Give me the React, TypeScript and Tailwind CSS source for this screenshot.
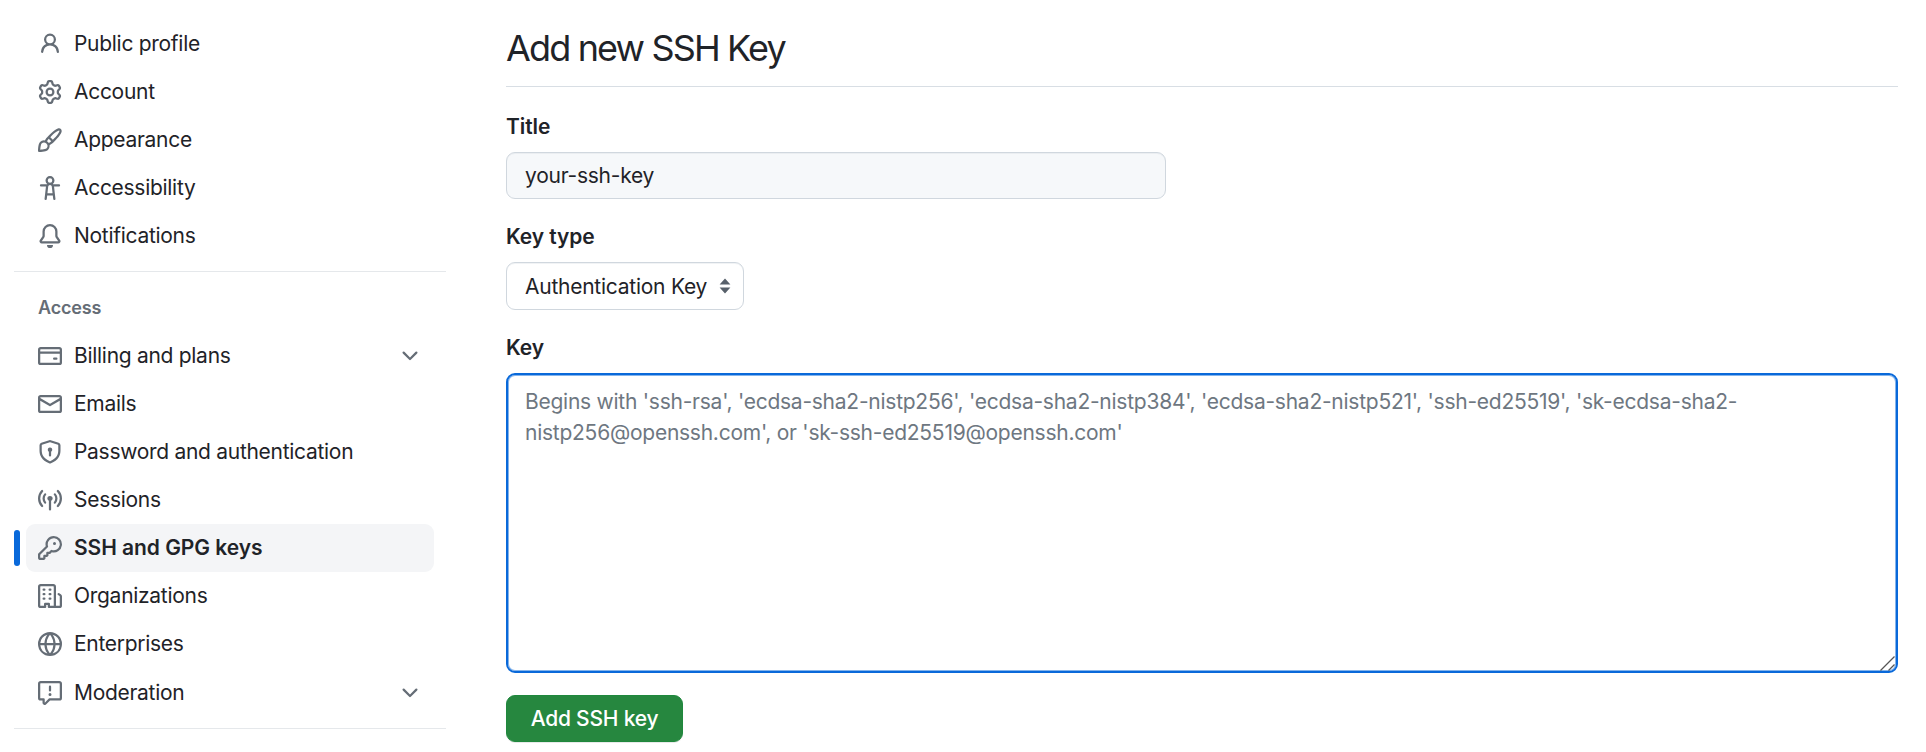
import type { ReactNode } from "react";

const paths = {
  person:
    "M10.561 8.073a6.005 6.005 0 0 1 3.432 5.142.75.75 0 1 1-1.498.07 4.5 4.5 0 0 0-8.99 0 .75.75 0 0 1-1.498-.07 6.004 6.004 0 0 1 3.431-5.142 3.999 3.999 0 1 1 5.123 0ZM10.5 5a2.5 2.5 0 1 0-5 0 2.5 2.5 0 0 0 5 0Z",
  gear:
    "M8 0a8.2 8.2 0 0 1 .701.031C9.444.095 9.99.645 10.16 1.29l.288 1.107c.018.066.079.158.212.224.231.114.454.243.668.386.123.082.233.09.299.071l1.103-.303c.644-.176 1.392.021 1.82.63.27.385.506.792.704 1.218.315.675.111 1.422-.364 1.891l-.814.806c-.049.048-.098.147-.088.294.016.257.016.515 0 .772-.01.147.038.246.088.294l.814.806c.475.469.679 1.216.364 1.891a7.977 7.977 0 0 1-.704 1.217c-.428.61-1.176.807-1.82.63l-1.102-.302c-.067-.019-.177-.011-.3.071a5.909 5.909 0 0 1-.668.386c-.133.066-.194.158-.211.224l-.29 1.106c-.168.646-.715 1.196-1.458 1.26a8.006 8.006 0 0 1-1.402 0c-.743-.064-1.289-.614-1.458-1.26l-.289-1.106c-.018-.066-.079-.158-.212-.224a5.738 5.738 0 0 1-.668-.386c-.123-.082-.233-.09-.299-.071l-1.103.303c-.644.176-1.392-.021-1.82-.63a8.12 8.12 0 0 1-.704-1.218c-.315-.675-.111-1.422.363-1.891l.815-.806c.05-.048.098-.147.088-.294a6.214 6.214 0 0 1 0-.772c.01-.147-.038-.246-.088-.294l-.815-.806C.635 6.045.431 5.298.746 4.623a7.92 7.92 0 0 1 .704-1.217c.428-.61 1.176-.807 1.82-.63l1.102.302c.067.019.177.011.3-.071.214-.143.437-.272.668-.386.133-.066.194-.158.211-.224l.29-1.106C6.009.645 6.556.095 7.299.03 7.53.01 7.764 0 8 0Zm-.571 1.525c-.036.003-.108.036-.137.146l-.289 1.105c-.147.561-.549.967-.998 1.189-.173.086-.34.183-.5.29-.417.278-.97.423-1.529.27l-1.103-.303c-.109-.03-.175.016-.195.045-.22.312-.412.644-.573.99-.014.031-.021.11.059.19l.815.806c.411.406.562.957.53 1.456a4.709 4.709 0 0 0 0 .582c.032.499-.119 1.05-.53 1.456l-.815.806c-.081.08-.073.159-.059.19.162.346.353.677.573.989.02.03.085.076.195.046l1.102-.303c.56-.153 1.113-.008 1.53.27.161.107.328.204.501.29.447.222.85.629.997 1.189l.289 1.105c.029.109.101.143.137.146a6.6 6.6 0 0 0 1.142 0c.036-.003.108-.036.137-.146l.289-1.105c.147-.561.549-.967.998-1.189.173-.086.34-.183.5-.29.417-.278.97-.423 1.529-.27l1.103.303c.109.029.175-.016.195-.045.22-.313.411-.644.573-.99.014-.031.021-.11-.059-.19l-.815-.806c-.411-.406-.562-.957-.53-1.456a4.709 4.709 0 0 0 0-.582c-.032-.499.119-1.05.53-1.456l.815-.806c.081-.08.073-.159.059-.19a6.464 6.464 0 0 0-.573-.989c-.02-.03-.085-.076-.195-.046l-1.102.303c-.56.153-1.113.008-1.53-.27a4.44 4.44 0 0 0-.501-.29c-.447-.222-.85-.629-.997-1.189l-.289-1.105c-.029-.11-.101-.143-.137-.146a6.6 6.6 0 0 0-1.142 0ZM11 8a3 3 0 1 1-6 0 3 3 0 0 1 6 0ZM9.5 8a1.5 1.5 0 1 0-3.001.001A1.5 1.5 0 0 0 9.5 8Z",
  paintbrush:
    "M11.134 1.535c.7-.509 1.416-.942 2.076-1.155.649-.21 1.463-.267 2.069.34.603.601.568 1.411.368 2.07-.202.668-.624 1.39-1.125 2.096-1.011 1.424-2.496 2.987-3.775 4.249-1.098 1.084-2.132 1.839-3.04 2.3a3.744 3.744 0 0 1-1.055 3.217c-.431.431-1.065.691-1.657.861-.614.177-1.294.287-1.914.357A21.151 21.151 0 0 1 .797 16H.743l.007-.75H.749L.742 16a.75.75 0 0 1-.743-.742l.743-.008-.742.007v-.054a21.25 21.25 0 0 1 .13-2.284c.067-.647.187-1.287.358-1.914.17-.591.43-1.226.86-1.657a3.746 3.746 0 0 1 3.227-1.054c.466-.893 1.225-1.907 2.314-2.982 1.271-1.255 2.833-2.75 4.245-3.777ZM1.62 13.089c-.051.464-.086.929-.104 1.395.466-.018.932-.053 1.396-.104a10.511 10.511 0 0 0 1.668-.309c.526-.151.856-.325 1.011-.48a2.25 2.25 0 1 0-3.182-3.182c-.155.155-.329.485-.48 1.01a10.515 10.515 0 0 0-.309 1.67Zm10.396-10.34c-1.224.89-2.605 2.189-3.822 3.384l1.718 1.718c1.21-1.205 2.51-2.597 3.387-3.833.47-.662.78-1.227.912-1.662.134-.444.032-.551.009-.575h-.001V1.78c-.014-.014-.113-.113-.548.027-.432.14-.995.462-1.655.942Zm-4.832 7.266-.001.001a9.859 9.859 0 0 0 1.63-1.142L7.155 7.216a9.7 9.7 0 0 0-1.161 1.607c.482.302.889.71 1.19 1.192Z",
  accessibility:
    "M9.923 5.302c.063.063.122.129.178.198H14A.75.75 0 0 1 14 7h-3.3l.578 5.163.362 2.997a.75.75 0 0 1-1.49.18L9.868 13H6.132l-.282 2.34a.75.75 0 0 1-1.49-.18l.362-2.997L5.3 7H2a.75.75 0 0 1 0-1.5h3.9a2.54 2.54 0 0 1 .176-.198 3 3 0 1 1 3.847 0ZM9.2 7.073h-.001a1.206 1.206 0 0 0-2.398 0L6.305 11.5h3.39ZM9.5 3a1.5 1.5 0 1 0-3.001.001A1.5 1.5 0 0 0 9.5 3Z",
  bell:
    "M8 16a2 2 0 0 0 1.985-1.75c.017-.137-.097-.25-.235-.25h-3.5c-.138 0-.252.113-.235.25A2 2 0 0 0 8 16ZM3 5a5 5 0 0 1 10 0v2.947c0 .05.015.098.042.139l1.703 2.555A1.519 1.519 0 0 1 13.482 13H2.518a1.516 1.516 0 0 1-1.263-2.36l1.703-2.554A.255.255 0 0 0 3 7.947Zm5-3.5A3.5 3.5 0 0 0 4.5 5v2.947c0 .346-.102.683-.294.97l-1.703 2.556a.017.017 0 0 0-.003.01l.001.006c0 .002.002.004.004.006l.006.004.007.001h10.964l.007-.001.006-.004.004-.006.001-.007a.017.017 0 0 0-.003-.01l-1.703-2.554a1.745 1.745 0 0 1-.294-.97V5A3.5 3.5 0 0 0 8 1.5Z",
  card:
    "M10.75 9a.75.75 0 0 0 0 1.5h1.5a.75.75 0 0 0 0-1.5h-1.5ZM0 3.75C0 2.784.784 2 1.75 2h12.5c.966 0 1.75.784 1.75 1.75v8.5A1.75 1.75 0 0 1 14.25 14H1.75A1.75 1.75 0 0 1 0 12.25ZM14.5 6.5h-13v5.75c0 .138.112.25.25.25h12.5a.25.25 0 0 0 .25-.25Zm0-2.75a.25.25 0 0 0-.25-.25H1.75a.25.25 0 0 0-.25.25V5h13Z",
  mail:
    "M1.75 2h12.5c.966 0 1.75.784 1.75 1.75v8.5A1.75 1.75 0 0 1 14.25 14H1.75A1.75 1.75 0 0 1 0 12.25v-8.5C0 2.784.784 2 1.75 2ZM1.5 12.251c0 .138.112.25.25.25h12.5a.25.25 0 0 0 .25-.25V5.809L8.38 9.397a.75.75 0 0 1-.76 0L1.5 5.809v6.442Zm13-8.181v-.32a.25.25 0 0 0-.25-.25H1.75a.25.25 0 0 0-.25.25v.32L8 7.88Z",
  shieldLock:
    "m8.533.133 5.25 1.68A1.75 1.75 0 0 1 15 3.48V7c0 1.566-.32 3.182-1.303 4.682-.983 1.498-2.585 2.813-5.032 3.855a1.697 1.697 0 0 1-1.33 0c-2.447-1.042-4.049-2.357-5.032-3.855C1.32 10.182 1 8.566 1 7V3.48a1.75 1.75 0 0 1 1.217-1.667l5.25-1.68a1.748 1.748 0 0 1 1.066 0Zm-.61 1.429.001.001-5.25 1.68a.251.251 0 0 0-.174.237V7c0 1.36.275 2.666 1.057 3.859.784 1.194 2.121 2.342 4.366 3.298a.196.196 0 0 0 .154 0c2.245-.957 3.582-2.103 4.366-3.297C13.225 9.666 13.5 8.358 13.5 7V3.48a.25.25 0 0 0-.174-.238l-5.25-1.68a.25.25 0 0 0-.153 0ZM9.5 6.5c0 .536-.286 1.032-.75 1.3v2.45a.75.75 0 0 1-1.5 0V7.8A1.5 1.5 0 1 1 9.5 6.5Z",
  broadcast:
    "M8.75 8.582v5.668a.75.75 0 0 1-1.5 0V8.582a1.75 1.75 0 1 1 1.5 0Zm3.983-7.125a.75.75 0 0 1 1.06.026A7.976 7.976 0 0 1 16 7c0 2.139-.84 4.083-2.207 5.517a.75.75 0 1 1-1.086-1.034A6.474 6.474 0 0 0 14.5 7a6.474 6.474 0 0 0-1.793-4.483.75.75 0 0 1 .026-1.06Zm-9.466 0c.3.286.312.76.026 1.06A6.474 6.474 0 0 0 1.5 7a6.47 6.47 0 0 0 1.793 4.483.75.75 0 0 1-1.086 1.034A7.973 7.973 0 0 1 0 7c0-2.139.84-4.083 2.207-5.517a.75.75 0 0 1 1.06-.026Zm8.556 2.321A4.988 4.988 0 0 1 13 7a4.988 4.988 0 0 1-1.177 3.222.75.75 0 1 1-1.146-.967A3.487 3.487 0 0 0 11.5 7c0-.86-.309-1.645-.823-2.255a.75.75 0 0 1 1.146-.967Zm-6.492.958A3.48 3.48 0 0 0 4.5 7a3.48 3.48 0 0 0 .823 2.255.75.75 0 0 1-1.146.967A4.981 4.981 0 0 1 3 7a4.982 4.982 0 0 1 1.188-3.236.75.75 0 1 1 1.143.972Z",
  key:
    "M10.5 0a5.499 5.499 0 1 1-1.288 10.848l-.932.932a.749.749 0 0 1-.53.22H7v.75a.749.749 0 0 1-.22.53l-.5.5a.749.749 0 0 1-.53.22H5v.75a.749.749 0 0 1-.22.53l-.5.5a.749.749 0 0 1-.53.22h-2A1.75 1.75 0 0 1 0 14.25v-2c0-.199.079-.389.22-.53l4.932-4.932A5.5 5.5 0 0 1 10.5 0Zm-4 5.5c-.001.431.069.86.205 1.269a.75.75 0 0 1-.181.768L1.5 12.56v1.69c0 .138.112.25.25.25h1.69l.06-.06v-1.19a.75.75 0 0 1 .75-.75h1.19l.06-.06v-1.19a.75.75 0 0 1 .75-.75h1.19l1.023-1.025a.75.75 0 0 1 .768-.18A4 4 0 1 0 6.5 5.5ZM11 6a1 1 0 1 1 0-2 1 1 0 0 1 0 2Z",
  organization:
    "M1.75 16A1.75 1.75 0 0 1 0 14.25V1.75C0 .784.784 0 1.75 0h8.5C11.216 0 12 .784 12 1.75v12.5c0 .085-.006.168-.018.25h2.268a.25.25 0 0 0 .25-.25V8.285a.25.25 0 0 0-.111-.208l-1.055-.703a.749.749 0 1 1 .832-1.248l1.055.703c.487.325.779.871.779 1.456v5.965A1.75 1.75 0 0 1 14.25 16h-3.5a.766.766 0 0 1-.197-.026c-.099.017-.2.026-.303.026h-3a.75.75 0 0 1-.75-.75V14h-1v1.25a.75.75 0 0 1-.75.75Zm-.25-1.75c0 .138.112.25.25.25H4v-1.25a.75.75 0 0 1 .75-.75h2.5a.75.75 0 0 1 .75.75v1.25h2.25a.25.25 0 0 0 .25-.25V1.75a.25.25 0 0 0-.25-.25h-8.5a.25.25 0 0 0-.25.25ZM3.75 6h.5a.75.75 0 0 1 0 1.5h-.5a.75.75 0 0 1 0-1.5ZM3 3.75A.75.75 0 0 1 3.75 3h.5a.75.75 0 0 1 0 1.5h-.5A.75.75 0 0 1 3 3.75Zm4 3A.75.75 0 0 1 7.75 6h.5a.75.75 0 0 1 0 1.5h-.5A.75.75 0 0 1 7 6.75ZM7.75 3h.5a.75.75 0 0 1 0 1.5h-.5a.75.75 0 0 1 0-1.5ZM3 9.75A.75.75 0 0 1 3.75 9h.5a.75.75 0 0 1 0 1.5h-.5A.75.75 0 0 1 3 9.75ZM7.75 9h.5a.75.75 0 0 1 0 1.5h-.5a.75.75 0 0 1 0-1.5Z",
  globe:
    "M8 0a8 8 0 1 1 0 16A8 8 0 0 1 8 0ZM5.78 8.75a9.64 9.64 0 0 0 1.363 4.177c.255.426.542.832.857 1.215.245-.296.551-.705.857-1.215A9.64 9.64 0 0 0 10.22 8.75Zm4.44-1.5a9.64 9.64 0 0 0-1.363-4.177c-.307-.51-.612-.919-.857-1.215a9.927 9.927 0 0 0-.857 1.215A9.64 9.64 0 0 0 5.78 7.25Zm-5.944 1.5H1.543a6.507 6.507 0 0 0 4.666 5.5c-.123-.181-.24-.365-.352-.552-.715-1.192-1.437-2.874-1.581-4.948Zm-2.733-1.5h2.733c.144-2.074.866-3.756 1.58-4.948.12-.197.237-.381.353-.552a6.507 6.507 0 0 0-4.666 5.5Zm10.181 1.5c-.144 2.074-.866 3.756-1.58 4.948-.12.197-.237.381-.353.552a6.507 6.507 0 0 0 4.666-5.5Zm2.733-1.5a6.507 6.507 0 0 0-4.666-5.5c.123.181.24.365.353.552.714 1.192 1.436 2.874 1.58 4.948Z",
  report:
    "M0 1.75C0 .784.784 0 1.75 0h12.5C15.216 0 16 .784 16 1.75v9.5A1.75 1.75 0 0 1 14.25 13H8.06l-2.573 2.573A1.458 1.458 0 0 1 3 14.543V13H1.75A1.75 1.75 0 0 1 0 11.25Zm1.75-.25a.25.25 0 0 0-.25.25v9.5c0 .138.112.25.25.25h2a.75.75 0 0 1 .75.75v2.19l2.72-2.72a.749.749 0 0 1 .53-.22h6.5a.25.25 0 0 0 .25-.25v-9.5a.25.25 0 0 0-.25-.25Zm7 2.25v2.5a.75.75 0 0 1-1.5 0v-2.5a.75.75 0 0 1 1.5 0ZM9 9a1 1 0 1 1-2 0 1 1 0 0 1 2 0Z",
  chevronDown:
    "M12.78 5.22a.749.749 0 0 1 0 1.06l-4.25 4.25a.749.749 0 0 1-1.06 0L3.22 6.28a.749.749 0 1 1 1.06-1.06L8 8.939l3.72-3.719a.749.749 0 0 1 1.06 0Z",
};

type IconName = keyof typeof paths;

function Icon({ name }: { name: IconName }) {
  return (
    <svg viewBox="0 0 16 16" className="size-6 shrink-0 fill-[#656d76]" aria-hidden="true">
      <path d={paths[name]} />
    </svg>
  );
}

type Item = { icon: IconName; label: string; expandable?: boolean; active?: boolean };

const personal: Item[] = [
  { icon: "person", label: "Public profile" },
  { icon: "gear", label: "Account" },
  { icon: "paintbrush", label: "Appearance" },
  { icon: "accessibility", label: "Accessibility" },
  { icon: "bell", label: "Notifications" },
];

const access: Item[] = [
  { icon: "card", label: "Billing and plans", expandable: true },
  { icon: "mail", label: "Emails" },
  { icon: "shieldLock", label: "Password and authentication" },
  { icon: "broadcast", label: "Sessions" },
  { icon: "key", label: "SSH and GPG keys", active: true },
  { icon: "organization", label: "Organizations" },
  { icon: "globe", label: "Enterprises" },
  { icon: "report", label: "Moderation", expandable: true },
];

function NavItem({ icon, label, expandable, active }: Item) {
  return (
    <li className="flex h-12 items-center">
      <span className={active ? "h-9 w-1.5 rounded-full bg-[#0969da]" : "h-9 w-1.5"} />
      <a
        href="#"
        className={
          active
            ? "ml-1.5 mr-3 flex h-12 flex-1 items-center rounded-[9px] bg-[#f4f5f7] px-3 font-semibold tracking-[-0.05px]"
            : "ml-1.5 mr-3 flex h-12 flex-1 items-center rounded-[9px] px-3 tracking-[-0.29px]"
        }
      >
        <Icon name={icon} />
        <span className="ml-3 flex-1">{label}</span>
        {expandable && <Icon name="chevronDown" />}
      </a>
    </li>
  );
}

function Label({ children, htmlFor }: { children: ReactNode; htmlFor: string }) {
  return (
    <label htmlFor={htmlFor} className="block h-8 font-semibold leading-8 tracking-[-0.1px]">
      {children}
    </label>
  );
}

export default function App() {
  return (
    <div className="flex h-[752px] overflow-hidden bg-white font-['Inter','Liberation_Sans',sans-serif] text-[21px] leading-[30px] tracking-[-0.25px] text-[#1f2328]">
      <nav className="ml-3.5 w-[432px] shrink-0 pt-5">
        <ul>
          {personal.map((item) => (
            <NavItem key={item.label} {...item} />
          ))}
        </ul>
        <div className="mt-[11px] border-t border-[#e5e8eb]" />
        <h2 className="flex h-[60px] items-center px-6 pt-3 text-lg font-semibold tracking-[-0.15px] text-[#656d76]">
          Access
        </h2>
        <ul className="[&>li:last-child]:mt-px">
          {access.map((item) => (
            <NavItem key={item.label} {...item} />
          ))}
        </ul>
        <div className="mt-[11px] border-t border-[#e5e8eb]" />
      </nav>

      <main className="ml-[60px] w-[1392px] shrink-0">
        <h1 className="h-[87px] border-b border-[#d8dee4] pt-[21px] text-[36px] leading-[54px] tracking-[-1.85px]">
          Add new SSH Key
        </h1>

        <div className="mt-6">
          <Label htmlFor="title">Title</Label>
          <input
            id="title"
            defaultValue="your-ssh-key"
            className="mt-[9px] block h-[47px] w-[660px] rounded-[9px] border border-[#d0d7de] bg-[#f6f8fa] px-[18px] shadow-[inset_0_1px_0_rgba(208,215,222,0.3)] outline-none"
          />
        </div>

        <div className="mt-[22px]">
          <Label htmlFor="key-type">Key type</Label>
          <button
            id="key-type"
            className="mt-[9px] flex h-12 w-[238px] items-center justify-between rounded-[9px] border border-[#d0d7de] bg-white pl-[18px] pr-3 shadow-[inset_0_1px_0_rgba(208,215,222,0.3)]"
          >
            <span className="whitespace-nowrap pt-0.5">Authentication Key</span>
            <svg viewBox="0 0 12 16" className="h-4 w-3 fill-[#57606a]" aria-hidden="true">
              <path d="M6 .6 11.400 6.500H.6ZM6 15.400 .6 9.500h10.800Z" />
            </svg>
          </button>
        </div>

        <div className="mt-[22px]">
          <Label htmlFor="key">Key</Label>
          <div className="relative mt-[9px]">
            <textarea
              id="key"
              placeholder="Begins with 'ssh-rsa', 'ecdsa-sha2-nistp256', 'ecdsa-sha2-nistp384', 'ecdsa-sha2-nistp521', 'ssh-ed25519', 'sk-ecdsa-sha2-nistp256@openssh.com', or 'sk-ssh-ed25519@openssh.com'"
              className="block h-[300px] w-full resize-none rounded-[9px] border-2 border-[#0969da] bg-white px-[17px] py-[11px] leading-[31px] shadow-[inset_0_0_0_1px_rgba(9,105,218,0.5)] outline-none placeholder:text-[#6e7781]"
            />
            <svg viewBox="0 0 16 16" className="absolute bottom-0.5 right-0.5 size-4 stroke-[#555]" aria-hidden="true">
              <path d="M0.500 15.500 14.500 1.500M8.500 15.500 14.500 9.500" strokeWidth="1.300" fill="none" />
            </svg>
          </div>
        </div>

        <button className="mt-[22px] flex h-[47px] w-[177px] items-center justify-center rounded-[9px] border border-[#1f883d] bg-[#26873f] font-medium tracking-[-0.2px] text-white shadow-[0_1px_0_rgba(31,35,40,0.1)]">
          Add SSH key
        </button>
      </main>
    </div>
  );
}
